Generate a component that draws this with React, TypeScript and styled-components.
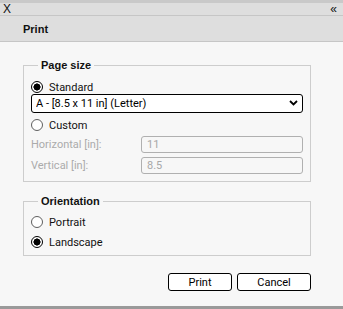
import styled, { createGlobalStyle } from "styled-components";

const GlobalStyle = createGlobalStyle`
  html, body {
    margin: 0;
    padding: 0;
    background: #f7f7f7;
  }
  body {
    font-family: Roboto, "Liberation Sans", sans-serif;
    font-size: 11px;
    color: #111;
  }
`;

const Dialog = styled.div`
  width: 343px;
  height: 309px;
  display: flex;
  flex-direction: column;
  background: #f7f7f7;
  box-sizing: border-box;
  border-bottom: 3px solid #9a9a9a;
`;

const TopStrip = styled.div`
  height: 3px;
  background: #c9c9c9;
`;

const TitleBar = styled.div`
  height: 12px;
  display: flex;
  align-items: center;
  justify-content: space-between;
  padding: 0 6px 0 3px;
  background: #dedede;
  border-bottom: 1px solid #c6c6c6;
  font-family: "Liberation Sans", sans-serif;
  font-size: 12px;
  line-height: 12px;
`;

const Header = styled.div`
  height: 26px;
  box-sizing: border-box;
  display: flex;
  align-items: center;
  padding: 1px 0 0 23px;
  background: #dedede;
  border-bottom: 1px solid #c6c6c6;
  font-family: "Liberation Sans", sans-serif;
  font-weight: bold;
  font-size: 11px;
`;

const Body = styled.div`
  flex: 1;
  padding: 16px 32px 0 23px;
  display: flex;
  flex-direction: column;
`;

const Group = styled.fieldset<{ $compact?: boolean }>`
  margin: 0;
  border: 1px solid #cdcdcd;
  padding: ${(p) => (p.$compact ? "7px 7px 6px" : "8px 7px 7px")};
  display: flex;
  flex-direction: column;
  & + & {
    margin-top: 12px;
  }
`;

const Legend = styled.legend`
  margin-left: 7px;
  padding: 0 3px;
  font-family: "Liberation Sans", sans-serif;
  font-weight: bold;
  font-size: 11px;
  line-height: 14px;
`;

const RadioRow = styled.label<{ $top?: number }>`
  display: flex;
  align-items: center;
  gap: 6px;
  height: 14px;
  margin-top: ${(p) => p.$top ?? 0}px;
  font-size: 11px;
`;

const RadioDot = styled.span<{ $checked?: boolean }>`
  width: 12px;
  height: 12px;
  border-radius: 50%;
  box-sizing: border-box;
  border: 1px solid ${(p) => (p.$checked ? "#000" : "#5f5f5f")};
  background: ${(p) =>
    p.$checked ? "radial-gradient(circle, #000 0 3.3px, #fff 3.8px)" : "#fff"};
  flex: none;
`;

const SelectWrap = styled.div`
  position: relative;
  height: 19px;
`;

const Select = styled.select`
  appearance: none;
  width: 100%;
  height: 19px;
  margin: 0;
  box-sizing: border-box;
  border: 1px solid #000;
  border-radius: 3px;
  background: #fff;
  padding: 0 4px;
  font-family: Roboto, sans-serif;
  font-size: 11px;
  color: #000;
`;

const Chevron = styled.svg`
  position: absolute;
  right: 5px;
  top: 6px;
  pointer-events: none;
`;

const FieldRow = styled.div`
  display: flex;
  align-items: center;
  height: 17px;
  margin-top: 4px;
`;

const FieldLabel = styled.span`
  width: 110px;
  color: #ababab;
  font-size: 11px;
`;

const NumberInput = styled.input`
  flex: 1;
  height: 17px;
  box-sizing: border-box;
  border: 1px solid #b0b0b0;
  border-radius: 3px;
  background: #f7f7f7;
  padding: 0 5px;
  font-family: Roboto, sans-serif;
  font-size: 11px;
  color: #a8a8a8;
  &:disabled {
    color: #a8a8a8;
  }
`;

const Actions = styled.div`
  display: flex;
  justify-content: flex-end;
  gap: 5px;
  margin-top: 17px;
`;

const Button = styled.button<{ $width: number }>`
  width: ${(p) => p.$width}px;
  height: 18px;
  box-sizing: border-box;
  border: 1px solid #000;
  border-radius: 3px;
  background: #fff;
  padding: 0;
  font-family: Roboto, sans-serif;
  font-size: 11px;
  color: #000;
`;

export default function App() {
  return (
    <>
      <GlobalStyle />
      <Dialog>
        <TopStrip />
        <TitleBar>
          <span>X</span>
          <span>«</span>
        </TitleBar>
        <Header>Print</Header>
        <Body>
          <Group>
            <Legend>Page size</Legend>
            <RadioRow>
              <RadioDot $checked />
              Standard
            </RadioRow>
            <SelectWrap>
              <Select defaultValue="letter">
                <option value="letter">A - [8.5 x 11 in] (Letter)</option>
              </Select>
              <Chevron width="9" height="6" viewBox="0 0 9 6">
                <path d="M1 1 L4.5 4.5 L8 1" fill="none" stroke="#000" strokeWidth="1.8" />
              </Chevron>
            </SelectWrap>
            <RadioRow $top={5}>
              <RadioDot />
              Custom
            </RadioRow>
            <FieldRow>
              <FieldLabel>Horizontal [in]:</FieldLabel>
              <NumberInput disabled defaultValue="11" />
            </FieldRow>
            <FieldRow>
              <FieldLabel>Vertical [in]:</FieldLabel>
              <NumberInput disabled defaultValue="8.5" />
            </FieldRow>
          </Group>
          <Group $compact>
            <Legend>Orientation</Legend>
            <RadioRow>
              <RadioDot />
              Portrait
            </RadioRow>
            <RadioRow $top={6}>
              <RadioDot $checked />
              Landscape
            </RadioRow>
          </Group>
          <Actions>
            <Button $width={64}>Print</Button>
            <Button $width={74}>Cancel</Button>
          </Actions>
        </Body>
      </Dialog>
    </>
  );
}
